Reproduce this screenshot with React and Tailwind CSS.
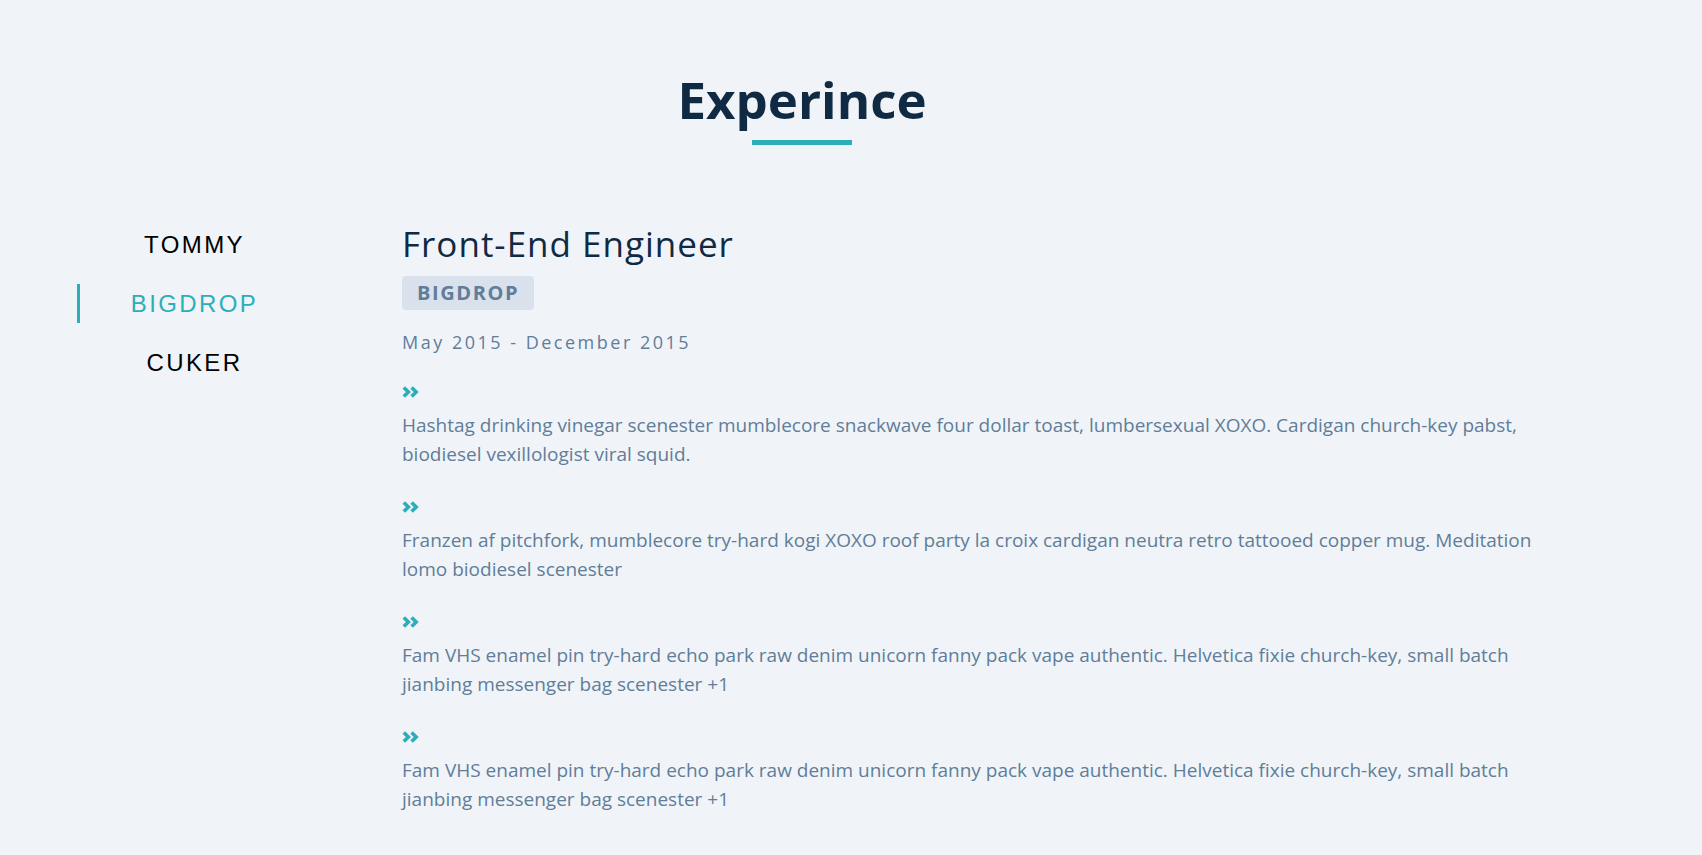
const jobs = [
  { id: 1, company: 'TOMMY' },
  { id: 2, company: 'BIGDROP' },
  { id: 3, company: 'CUKER' }
]

const duties = [
  'Hashtag drinking vinegar scenester mumblecore snackwave four dollar toast, lumbersexual XOXO. Cardigan church-key pabst, biodiesel vexillologist viral squid.',
  'Franzen af pitchfork, mumblecore try-hard kogi XOXO roof party la croix cardigan neutra retro tattooed copper mug. Meditation lomo biodiesel scenester',
  'Fam VHS enamel pin try-hard echo park raw denim unicorn fanny pack vape authentic. Helvetica fixie church-key, small batch jianbing messenger bag scenester +1',
  'Fam VHS enamel pin try-hard echo park raw denim unicorn fanny pack vape authentic. Helvetica fixie church-key, small batch jianbing messenger bag scenester +1'
]

function Chevrons() {
  return (
    <svg className="w-[17px] h-[12px]" viewBox="0 0 17 12" fill="none" stroke="#2caeba" strokeWidth={3.6} strokeLinejoin="miter" strokeLinecap="butt">
      <path d="M1.8 1.4l4.6 4.6-4.6 4.6" />
      <path d="M9.6 1.4l4.6 4.6-4.6 4.6" />
    </svg>
  )
}

export default function App() {
  const active = 1

  return (
    <div className="min-h-screen bg-[#f0f4f8] font-['Open_Sans',sans-serif]">
      <section className="pt-[74px] pb-10">
        {/* Title */}
        <div className="pr-[98px] text-center">
          <h2 className="text-[51px] leading-none font-bold text-[#102a43]">Experince</h2>
          <div className="mx-auto mt-[15px] h-[5px] w-[100px] bg-[#2caeba]" />
        </div>

        <div className="mt-[80px] flex items-start pl-[77px]">
          {/* Job tabs */}
          <div className="w-[232px] flex flex-col gap-[20px]">
            {jobs.map((job, i) => (
              <button
                key={job.id}
                className={`h-[39px] flex items-center justify-center border-l-[3px] font-['Liberation_Sans',Arial,sans-serif] text-[24px] leading-none tracking-[0.1em] ${
                  i === active ? 'border-[#2caeba] text-[#2caeba]' : 'border-transparent text-black'
                }`}
              >
                {job.company}
              </button>
            ))}
          </div>

          {/* Job info */}
          <article className="ml-[93px] w-[1150px] pt-px">
            <h3 className="text-[35px] leading-none tracking-[1px] text-[#102a43]">Front-End Engineer</h3>
            <div className="mt-[15px] inline-flex h-[34px] items-center rounded-[4px] bg-[#d9e2ec] px-[15px] text-[20px] font-bold tracking-[1.6px] text-[#617d98]">
              BIGDROP
            </div>
            <p className="mt-[23px] text-[18px] leading-none tracking-[2.5px] text-[#617d98]">May 2015 - December 2015</p>

            <div className="mt-[35px] flex flex-col gap-[32px]">
              {duties.map((duty, i) => (
                <div key={i}>
                  <Chevrons />
                  <p className="mt-[13px] text-[19px] leading-[29px] text-[#617d98]">{duty}</p>
                </div>
              ))}
            </div>
          </article>
        </div>
      </section>
    </div>
  )
}
